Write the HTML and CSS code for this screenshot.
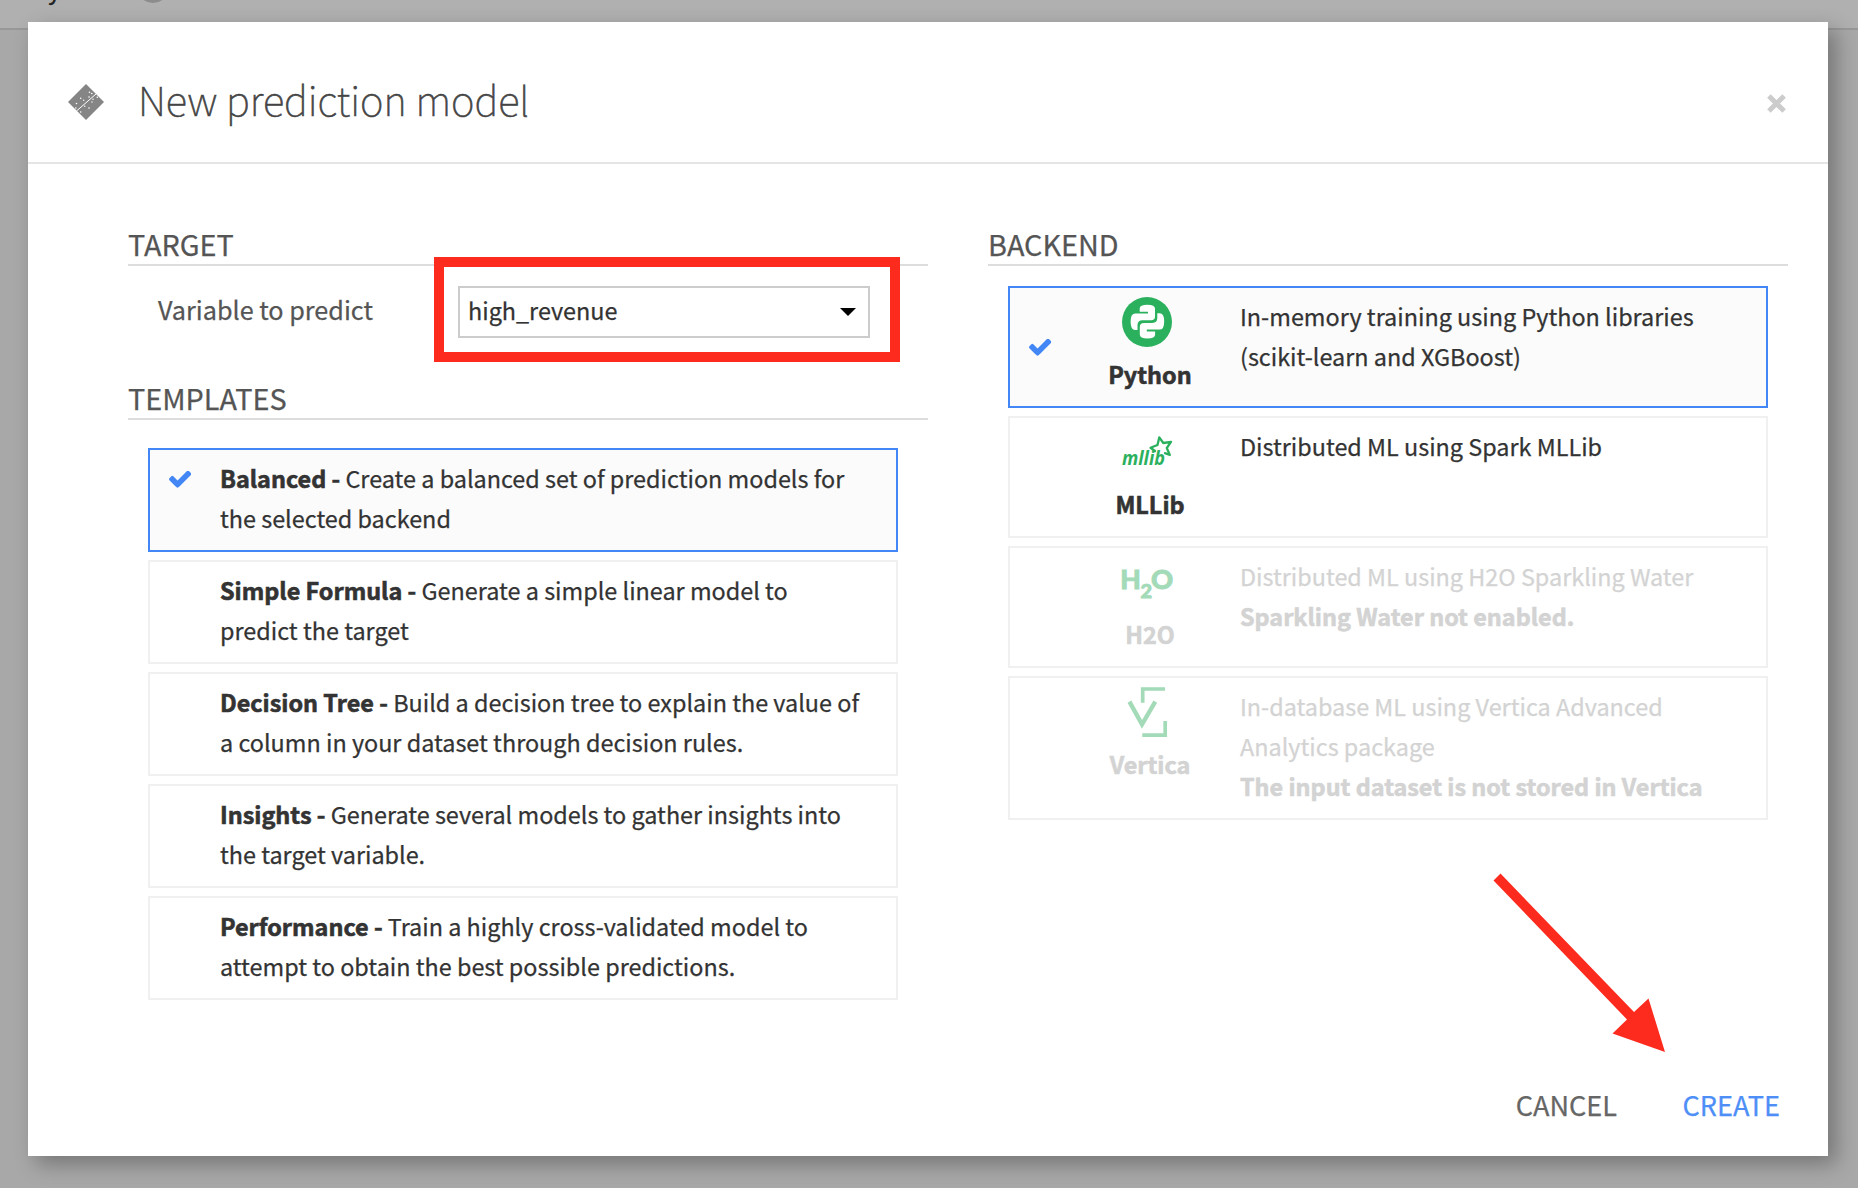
FILE: index.html
```html
<!DOCTYPE html>
<html lang="en">
<head>
<meta charset="utf-8">
<title>New prediction model</title>
<link rel="stylesheet" href="styles.css">
</head>
<body>
<svg class="defs" aria-hidden="true">
  <symbol id="check" viewBox="121 374 1550 1148"><path d="M1671 566q0 40-28 68l-724 724-136 136q-28 28-68 28t-68-28l-136-136-362-362q-28-28-28-68t28-68l136-136q28-28 68-28t68 28l294 295 656-657q28-28 68-28t68 28l136 136q28 28 28 68z"/></symbol>
</svg>
<div class="page">
  <div class="topbar"><span class="crumb">y</span><span class="avatar"></span></div>

  <div class="modal" role="dialog">
    <header class="modal-header">
      <svg class="model-icon" viewBox="0 0 36 36">
        <path d="M18 0 36 18 18 36 0 18z" fill="#858585"/>
        <path d="M8.3 27.2 28 10" stroke="#fff" stroke-width="1"/>
        <g fill="#fff"><circle cx="21.5" cy="8.3" r=".8"/><circle cx="23.8" cy="9.5" r=".8"/><circle cx="12.7" cy="14.3" r=".8"/><circle cx="15.7" cy="16.3" r=".7"/><circle cx="21" cy="13" r=".8"/><circle cx="25" cy="15.3" r=".7"/><circle cx="29.3" cy="13.3" r=".8"/><circle cx="8.5" cy="19.5" r=".8"/><circle cx="7.8" cy="24" r=".8"/><circle cx="16.8" cy="22.3" r=".7"/><circle cx="21" cy="24" r=".8"/><circle cx="12.7" cy="28" r=".8"/><circle cx="24" cy="18" r=".7"/></g>
      </svg>
      <h1 class="modal-title">New prediction model</h1>
      <svg class="close" viewBox="0 0 19 19"><path d="M1.9 1.9 17.1 17.1M17.1 1.9 1.9 17.1" stroke="#ccc" stroke-width="5"/></svg>
    </header>

    <div class="modal-body">
      <section class="column">
        <h2 class="section-title">TARGET</h2>
        <div class="field">
          <label class="field-label">Variable to predict</label>
          <div class="select"><span>high_revenue</span><span class="caret"></span><span class="highlight"></span></div>
        </div>
        <h2 class="section-title">TEMPLATES</h2>
        <div class="cards templates">
          <div class="card selected"><div class="mark"><svg class="check"><use href="#check"/></svg></div><p><b>Balanced -</b> Create a balanced set of prediction models for the selected backend</p></div>
          <div class="card"><div class="mark"></div><p><b>Simple Formula -</b> Generate a simple linear model to predict the target</p></div>
          <div class="card"><div class="mark"></div><p><b>Decision Tree -</b> Build a decision tree to explain the value of a column in your dataset through decision rules.</p></div>
          <div class="card"><div class="mark"></div><p><b>Insights -</b> Generate several models to gather insights into the target variable.</p></div>
          <div class="card"><div class="mark"></div><p><b>Performance -</b> Train a highly cross-validated model to attempt to obtain the best possible predictions.</p></div>
        </div>
      </section>

      <section class="column">
        <h2 class="section-title">BACKEND</h2>
        <div class="cards backends">
          <div class="card selected">
            <div class="mark"><svg class="check"><use href="#check"/></svg></div>
            <div class="engine">
              <svg class="logo" viewBox="0 0 50 50"><circle cx="25" cy="25" r="25" fill="#2bb05e"/>
                <g fill="#fff"><path id="snake" d="M17.7 14.8V11.5Q17.7 7.8 25.4 7.8 33 7.8 33 11.8V19.5Q33 23.3 29 23.3H20.5Q15.5 23.3 15.5 28.2V33H13.2Q8.6 33 8.6 24.8 8.6 16.6 13.2 16.6H26V14.8z"/><use href="#snake" transform="rotate(180 25.4 24.6)"/></g>
              </svg>
              <b>Python</b>
            </div>
            <p>In-memory training using Python libraries (scikit-learn and XGBoost)</p>
          </div>
          <div class="card">
            <div class="mark"></div>
            <div class="engine">
              <svg class="logo" viewBox="0 0 50 50">
                <text class="mllib" x="0" y="38.3" textLength="43" lengthAdjust="spacingAndGlyphs">mllib</text>
                <path d="M33 24 28.5 20.8 35.5 18 37.3 10.3 41.3 16 49 14.8 44.8 21 47.8 28 43 26.2" fill="none" stroke="#2bb05e" stroke-width="2.3" stroke-linejoin="round" stroke-linecap="round"/>
              </svg>
              <b>MLLib</b>
            </div>
            <p>Distributed ML using Spark MLLib</p>
          </div>
          <div class="card disabled">
            <div class="mark"></div>
            <div class="engine">
              <svg class="logo h2o" viewBox="0 0 50 50">
                <text x="-1.7" y="32.3" font-size="26.8" textLength="20.6" lengthAdjust="spacingAndGlyphs">H</text>
                <text x="18.6" y="40.7" font-size="18.6" textLength="11.6" lengthAdjust="spacingAndGlyphs">2</text>
                <text x="28.9" y="32.3" font-size="26.8" textLength="22.2" lengthAdjust="spacingAndGlyphs">O</text>
              </svg>
              <b>H2O</b>
            </div>
            <p>Distributed ML using H2O Sparkling Water<br><b>Sparkling Water not enabled.</b></p>
          </div>
          <div class="card disabled">
            <div class="mark"></div>
            <div class="engine">
              <svg class="logo" viewBox="0 0 50 50" fill="none" stroke="#a3dab8"><path d="M20.7 15.8V2H43M20.3 48.2H43.2V34" stroke-width="3.7"/><path d="M7.4 14.6 20 37.3 33.3 14.6" stroke-width="4.3"/></svg>
              <b>Vertica</b>
            </div>
            <p>In-database ML using Vertica Advanced Analytics package<br><b>The input dataset is not stored in Vertica</b></p>
          </div>
        </div>
      </section>
    </div>

    <footer class="modal-footer">
      <span class="btn">CANCEL</span>
      <span class="btn primary">CREATE</span>
    </footer>

    <svg class="arrow" viewBox="0 0 172 180"><path d="M.5 7.5 7.5.5 141 139 155.500 125.500 172 179 119.500 160.500 134 146.500z" fill="#fd2b1e"/></svg>
  </div>
</div>
</body>
</html>
```

FILE: styles.css
```css
* { box-sizing: border-box; }

body {
  margin: 0;
  font-family: "Noto Sans CJK SC", "Open Sans", sans-serif;
  font-size: 23.4px;
  line-height: 40px;
  color: #333;
  -webkit-text-stroke: .25px;
}

h1, h2, p { margin: 0; font-weight: 400; }
b { -webkit-text-stroke: .6px; }
svg { display: block; flex: none; }
.defs { position: absolute; width: 0; height: 0; }

.page {
  position: relative;
  height: 1188px;
  overflow: hidden;
  background: #a8a8a8;
}

.topbar {
  position: relative;
  height: 30px;
  background: #b0b0b0;
  border-bottom: 2px solid #989898;
}
.crumb {
  position: absolute;
  left: 48px;
  top: -32px;
  font-size: 25px;
  color: #222;
}
.avatar {
  position: absolute;
  left: 137px;
  top: -29px;
  width: 32px;
  height: 32px;
  border-radius: 50%;
  background: #8c8c8c;
}

.modal {
  position: absolute;
  left: 28px;
  top: 22px;
  width: 1800px;
  height: 1134px;
  display: flex;
  flex-direction: column;
  background: #fff;
  box-shadow: 8px 8px 20px rgba(0, 0, 0, .3);
}

.modal-header {
  display: flex;
  align-items: flex-start;
  height: 142px;
  padding: 0 42px 0 40px;
  border-bottom: 2px solid #e5e5e5;
}
.model-icon { width: 36px; height: 36px; margin-top: 62px; }
.modal-title {
  flex: 1;
  margin: 48px 0 0 34px;
  font-size: 40px;
  font-weight: 100;
  line-height: 58px;
  color: #444;
  -webkit-text-stroke: .6px #444;
}
.close { width: 19px; height: 19px; margin-top: 72px; }

.modal-body {
  flex: 1;
  display: flex;
  gap: 60px;
  padding: 58px 40px 0 100px;
}
.column { width: 800px; }

.section-title {
  height: 44px;
  border-bottom: 2px solid #ddd;
  font-size: 28.8px;
  line-height: 44px;
  color: #555;
}

.field {
  display: flex;
  height: 52px;
  margin: 20px 0 38px;
  padding-left: 30px;
}
.field-label {
  width: 300px;
  font-size: 25.2px;
  line-height: 47px;
  color: #555;
}
.select {
  position: relative;
  display: flex;
  justify-content: space-between;
  width: 412px;
  padding: 0 12px 0 8px;
  border: 2px solid #ccc;
  line-height: 44px;
}
.caret {
  margin-top: 20px;
  height: 8px;
  border: 8px solid transparent;
  border-top-color: #000;
  border-bottom: 0;
}
.highlight {
  position: absolute;
  inset: -31px -32px -26px -26px;
  border: 10px solid #fd2b1e;
}

.cards { display: flex; flex-direction: column; gap: 8px; }
.templates { margin: 28px 30px 0 20px; }
.backends { margin: 20px 20px 0; }

.card {
  display: flex;
  padding: 8px 26px 12px 18.7px;
  border: 2px solid #f0f0f0;
}
.backends .card { min-height: 122px; }
.card p { flex: 1; }
.card.selected { background: #fbfbfb; border-color: #4387f6; }
.card.disabled { color: #d3d3d3; }

.mark { width: 51.3px; padding-top: 12.5px; }
.backends .mark {
  width: 31.3px;
  padding: 4px 0 0;
  display: flex;
  align-items: center;
}
.check { width: 22.3px; height: 17px; fill: #4387f6; }

.engine {
  width: 180px;
  display: flex;
  flex-direction: column;
  align-items: center;
  padding-top: 1px;
  margin-bottom: -10px;
}
.logo {
  width: 50px;
  height: 50px;
  margin: 0 6px 7px 0;
  overflow: visible;
}
.mllib {
  font: italic 700 19.5px "Open Sans", sans-serif;
  fill: #2bb05e;
}
.h2o {
  font-family: Lato, sans-serif;
  font-weight: 900;
  fill: #a3dab8;
}
.h2o text { stroke: #a3dab8; stroke-width: .8px; }

.modal-footer {
  display: flex;
  justify-content: flex-end;
  gap: 65.5px;
  padding: 0 48px 31px 0;
  font-size: 27.1px;
  color: #666;
}
.primary { color: #4e8ff7; }

.arrow {
  position: absolute;
  left: 1465px;
  top: 851px;
  width: 172px;
  height: 180px;
}
```
